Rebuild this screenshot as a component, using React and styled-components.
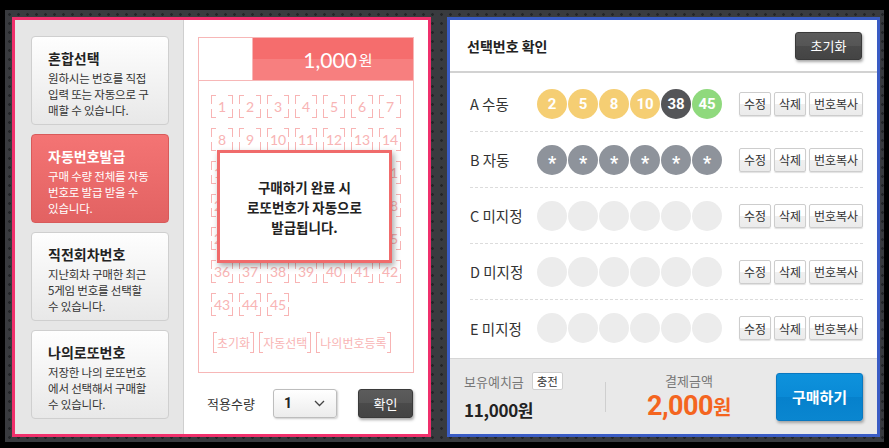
import React from 'react';
import styled, { createGlobalStyle } from 'styled-components';

const KR = `"Noto Sans CJK KR", "Noto Sans", sans-serif`;

const GlobalStyle = createGlobalStyle`
  html, body {
    margin: 0;
    padding: 0;
    background: #000;
  }
  body {
    font-family: ${KR};
    color: #222;
  }
  * { box-sizing: border-box; }
`;

const Page = styled.div`
  width: 889px;
  height: 448px;
  background: #000;
  padding: 10px 5px 6px 5px;
`;

const Stage = styled.div`
  width: 879px;
  height: 432px;
  display: flex;
  gap: 16px;
  padding: 7px 4px 5px 7px;
  background-color: #393b3f;
  background-image: radial-gradient(circle, #232528 1px, transparent 1.6px);
  background-size: 9px 9px;
`;

const LeftPanel = styled.div`
  width: 419px;
  height: 420px;
  border: 3px solid #f0306c;
  display: flex;
  background: #fff;
`;

const Sidebar = styled.div`
  width: 169px;
  background: #e6e6e6;
  border-right: 1px solid #cfcfcf;
  padding: 16px 0 0 16px;
  display: flex;
  flex-direction: column;
  gap: 9px;
`;

const Card = styled.div`
  width: 138px;
  height: 89px;
  border-radius: 4px;
  padding: 11px 0 0 16px;
  border: 1px solid ${p => (p.$active ? '#d85a5a' : '#cfcfcf')};
  background: ${p =>
    p.$active
      ? 'linear-gradient(#f47474, #e26262)'
      : 'linear-gradient(#fefefe, #e8e8e8)'};
  color: ${p => (p.$active ? '#fff' : '#333')};
`;

const CardTitle = styled.div`
  font-size: 14px;
  font-weight: 700;
  line-height: 20px;
  color: ${p => (p.$active ? '#fff' : '#222')};
`;

const CardText = styled.div`
  font-size: 11.5px;
  line-height: 16px;
  margin-top: 2px;
  letter-spacing: -0.2px;
`;

const SlipArea = styled.div`
  flex: 1;
  padding: 17px 0 0 14px;
  display: flex;
  flex-direction: column;
`;

const Slip = styled.div`
  position: relative;
  width: 216px;
  height: 336px;
  border: 1px solid #f7b7b7;
`;

const SlipHead = styled.div`
  display: flex;
  height: 43px;
  border-bottom: 1px solid #f7b7b7;
`;

const SlipBlank = styled.div`
  width: 54px;
  border-right: 1px solid #f7b7b7;
`;

const Price = styled.div`
  flex: 1;
  display: flex;
  align-items: center;
  justify-content: center;
  gap: 2px;
  color: #fff;
  background: linear-gradient(#f56d6d 0, #f56d6d 50%, #f77f7f 50%, #f77f7f 100%);
  font-family: Lato, sans-serif;
  font-size: 21px;
  font-weight: 400;
  padding-left: 10px;
`;

const Won = styled.span`
  font-family: ${KR};
  font-size: 15px;
  font-weight: 400;
`;

const Grid = styled.div`
  display: grid;
  grid-template-columns: repeat(7, 22px);
  grid-auto-rows: 23px;
  column-gap: 6px;
  row-gap: 10px;
  padding: 14px 0 0 12px;
`;

const pink = '#f8b4b4';

const Cell = styled.div`
  display: flex;
  align-items: center;
  justify-content: center;
  font-family: Lato, sans-serif;
  font-size: 14px;
  color: ${pink};
  background:
    linear-gradient(${pink}, ${pink}) left top / 5px 1px no-repeat,
    linear-gradient(${pink}, ${pink}) right top / 5px 1px no-repeat,
    linear-gradient(${pink}, ${pink}) left bottom / 5px 1px no-repeat,
    linear-gradient(${pink}, ${pink}) right bottom / 5px 1px no-repeat,
    linear-gradient(${pink}, ${pink}) left top / 1px 9px no-repeat,
    linear-gradient(${pink}, ${pink}) right top / 1px 9px no-repeat,
    linear-gradient(${pink}, ${pink}) left bottom / 1px 9px no-repeat,
    linear-gradient(${pink}, ${pink}) right bottom / 1px 9px no-repeat;
`;

const SlipButtons = styled.div`
  display: flex;
  gap: 5px;
  padding: 16px 0 0 14px;
`;

const Bracket = styled.div`
  height: 21px;
  padding: 0 4px;
  display: flex;
  align-items: center;
  font-size: 12px;
  color: ${pink};
  background:
    linear-gradient(${pink}, ${pink}) left top / 4px 1px no-repeat,
    linear-gradient(${pink}, ${pink}) left bottom / 4px 1px no-repeat,
    linear-gradient(${pink}, ${pink}) right top / 4px 1px no-repeat,
    linear-gradient(${pink}, ${pink}) right bottom / 4px 1px no-repeat,
    linear-gradient(${pink}, ${pink}) left / 1px 100% no-repeat,
    linear-gradient(${pink}, ${pink}) right / 1px 100% no-repeat;
`;

const Popup = styled.div`
  position: absolute;
  left: 18px;
  top: 112px;
  width: 175px;
  height: 113px;
  border: 3px solid #f06b6b;
  background: #fff;
  box-shadow: 2px 3px 6px rgba(0, 0, 0, 0.35);
  display: flex;
  align-items: center;
  justify-content: center;
  text-align: center;
  font-size: 13.5px;
  font-weight: 700;
  line-height: 20px;
  color: #222;
`;

const SlipFooter = styled.div`
  display: flex;
  align-items: center;
  height: 30px;
  margin-top: 15px;
  padding-left: 9px;
`;

const QtyLabel = styled.span`
  font-size: 13px;
  color: #333;
  width: 66px;
`;

const Select = styled.div`
  width: 64px;
  height: 29px;
  border: 1px solid #bdbdbd;
  border-radius: 3px;
  background: linear-gradient(#fff, #ececec);
  box-shadow: 1px 1px 2px rgba(0, 0, 0, 0.2);
  display: flex;
  align-items: center;
  justify-content: space-between;
  padding: 0 11px 0 10px;
  font-family: Roboto, sans-serif;
  font-weight: 700;
  font-size: 14px;
  color: #222;
`;

const DarkButton = styled.div`
  width: ${p => p.$w}px;
  height: ${p => p.$h}px;
  margin-left: ${p => p.$ml || 0}px;
  border-radius: 3px;
  border: 1px solid #3a3a3a;
  background: linear-gradient(#5c5c5c 0, #555 50%, #4a4a4a 50%, #444 100%);
  box-shadow: 1px 2px 3px rgba(0, 0, 0, 0.35);
  color: #fff;
  font-size: 13px;
  display: flex;
  align-items: center;
  justify-content: center;
`;

const RightPanel = styled.div`
  width: 433px;
  height: 420px;
  border: 3px solid #3a5cc4;
  background: #fff;
  display: flex;
  flex-direction: column;
`;

const RHead = styled.div`
  height: 53px;
  border-bottom: 2px solid #d2d2d2;
  display: flex;
  align-items: center;
  justify-content: space-between;
  padding: 0 15px 0 17px;
`;

const RTitle = styled.div`
  font-size: 14px;
  font-weight: 700;
  color: #222;
`;

const Rows = styled.div`
  padding: 3px 14px 0 20px;
  flex: 1;
`;

const Row = styled.div`
  height: 56px;
  display: flex;
  align-items: center;
  border-bottom: ${p => (p.$last ? 'none' : '1px dashed #dcdcdc')};
`;

const RowLabel = styled.div`
  width: 67px;
  font-size: 14.5px;
  color: #333;
`;

const Balls = styled.div`
  display: flex;
  gap: 1px;
  width: 202px;
`;

const Ball = styled.div`
  width: 30px;
  height: 30px;
  border-radius: 50%;
  background: ${p => p.$bg};
  color: #fff;
  font-family: Roboto, sans-serif;
  font-weight: 700;
  font-size: ${p => (p.$star ? 18 : 15)}px;
  display: flex;
  align-items: center;
  justify-content: center;
  padding-top: ${p => (p.$star ? 5 : 0)}px;
`;

const RowActions = styled.div`
  display: flex;
  gap: 3px;
  margin-left: auto;
`;

const SmallBtn = styled.div`
  width: ${p => p.$w}px;
  height: 24px;
  border: 1px solid #cdcdcd;
  border-radius: 2px;
  background: linear-gradient(#fff 0, #fff 50%, #f0f0f0 50%, #ebebeb 100%);
  box-shadow: 0 1px 1px rgba(0, 0, 0, 0.12);
  font-size: 12px;
  color: #333;
  display: flex;
  align-items: center;
  justify-content: center;
`;

const Footer = styled.div`
  height: 76px;
  background: #e9e9e9;
  border-top: 1px solid #d6d6d6;
  display: flex;
  align-items: center;
  padding: 0 14px 0 14px;
`;

const Deposit = styled.div`
  width: 141px;
  display: flex;
  flex-direction: column;
  gap: 6px;
`;

const DepositTop = styled.div`
  display: flex;
  align-items: center;
  gap: 8px;
  font-size: 13px;
  color: #777;
`;

const ChargeBtn = styled.div`
  width: 31px;
  height: 18px;
  border: 1px solid #cfcfcf;
  border-radius: 2px;
  background: #fff;
  font-size: 11.5px;
  color: #333;
  display: flex;
  align-items: center;
  justify-content: center;
`;

const Balance = styled.div`
  font-size: 17px;
  font-weight: 700;
  color: #222;
  letter-spacing: -0.3px;
`;

const Divider = styled.div`
  width: 1px;
  height: 30px;
  background: #cfcfcf;
`;

const Pay = styled.div`
  width: 166px;
  display: flex;
  flex-direction: column;
  align-items: center;
`;

const PayLabel = styled.div`
  font-size: 13px;
  color: #777;
`;

const PayAmount = styled.div`
  font-family: Roboto, sans-serif;
  font-size: 27px;
  font-weight: 700;
  color: #f4651f;
  line-height: 32px;
  letter-spacing: -0.5px;
  span {
    font-family: ${KR};
    font-size: 20px;
  }
`;

const BuyButton = styled.div`
  width: 87px;
  height: 48px;
  margin-left: auto;
  border-radius: 3px;
  border: 1px solid #0a78c0;
  background: linear-gradient(#0e92dc 0, #0a8ad6 50%, #0681cc 50%, #0a86d0 100%);
  box-shadow: 1px 2px 3px rgba(0, 0, 0, 0.3);
  color: #fff;
  font-size: 15px;
  font-weight: 700;
  display: flex;
  align-items: center;
  justify-content: center;
`;

const Chevron = () => (
  <svg width="11" height="7" viewBox="0 0 11 7">
    <path d="M1 1l4.5 4.5L10 1" fill="none" stroke="#444" strokeWidth="1.3" />
  </svg>
);

const cards = [
  { title: '혼합선택', text: ['원하시는 번호를 직접', '입력 또는 자동으로 구', '매할 수 있습니다.'] },
  { title: '자동번호발급', text: ['구매 수량 전체를 자동', '번호로 발급 받을 수', '있습니다.'], active: true },
  { title: '직전회차번호', text: ['지난회차 구매한 최근', '5게임 번호를 선택할', '수 있습니다.'] },
  { title: '나의로또번호', text: ['저장한 나의 로또번호', '에서 선택해서 구매할', '수 있습니다.'] },
];

const ballColors = { y: '#f5ce73', d: '#545558', g: '#8fd97d' };

const rows = [
  { label: 'A 수동', balls: [['2', 'y'], ['5', 'y'], ['8', 'y'], ['10', 'y'], ['38', 'd'], ['45', 'g']] },
  { label: 'B 자동', auto: true },
  { label: 'C 미지정' },
  { label: 'D 미지정' },
  { label: 'E 미지정' },
];

const numbers = Array.from({ length: 45 }, (_, i) => i + 1);

const App = () => (
  <Page>
    <GlobalStyle />
    <Stage>
      <LeftPanel>
        <Sidebar>
          {cards.map(c => (
            <Card key={c.title} $active={c.active}>
              <CardTitle $active={c.active}>{c.title}</CardTitle>
              <CardText>
                {c.text.map(t => (
                  <div key={t}>{t}</div>
                ))}
              </CardText>
            </Card>
          ))}
        </Sidebar>
        <SlipArea>
          <Slip>
            <SlipHead>
              <SlipBlank />
              <Price>
                1,000<Won>원</Won>
              </Price>
            </SlipHead>
            <Grid>
              {numbers.map(n => (
                <Cell key={n}>{n}</Cell>
              ))}
            </Grid>
            <SlipButtons>
              <Bracket>초기화</Bracket>
              <Bracket>자동선택</Bracket>
              <Bracket>나의번호등록</Bracket>
            </SlipButtons>
            <Popup>
              <div>
                구매하기 완료 시<br />
                로또번호가 자동으로<br />
                발급됩니다.
              </div>
            </Popup>
          </Slip>
          <SlipFooter>
            <QtyLabel>적용수량</QtyLabel>
            <Select>
              1
              <Chevron />
            </Select>
            <DarkButton $w={55} $h={29} $ml={21}>확인</DarkButton>
          </SlipFooter>
        </SlipArea>
      </LeftPanel>

      <RightPanel>
        <RHead>
          <RTitle>선택번호 확인</RTitle>
          <DarkButton $w={67} $h={28}>초기화</DarkButton>
        </RHead>
        <Rows>
          {rows.map((r, i) => (
            <Row key={r.label} $last={i === rows.length - 1}>
              <RowLabel>{r.label}</RowLabel>
              <Balls>
                {r.balls
                  ? r.balls.map(([n, c]) => (
                      <Ball key={n} $bg={ballColors[c]}>{n}</Ball>
                    ))
                  : Array.from({ length: 6 }, (_, k) =>
                      r.auto ? (
                        <Ball key={k} $bg="#8e939b" $star>*</Ball>
                      ) : (
                        <Ball key={k} $bg="#ececec" />
                      )
                    )}
              </Balls>
              <RowActions>
                <SmallBtn $w={32}>수정</SmallBtn>
                <SmallBtn $w={32}>삭제</SmallBtn>
                <SmallBtn $w={54}>번호복사</SmallBtn>
              </RowActions>
            </Row>
          ))}
        </Rows>
        <Footer>
          <Deposit>
            <DepositTop>
              보유예치금
              <ChargeBtn>충전</ChargeBtn>
            </DepositTop>
            <Balance>11,000원</Balance>
          </Deposit>
          <Divider />
          <Pay>
            <PayLabel>결제금액</PayLabel>
            <PayAmount>
              2,000<span>원</span>
            </PayAmount>
          </Pay>
          <BuyButton>구매하기</BuyButton>
        </Footer>
      </RightPanel>
    </Stage>
  </Page>
);

export default App;
